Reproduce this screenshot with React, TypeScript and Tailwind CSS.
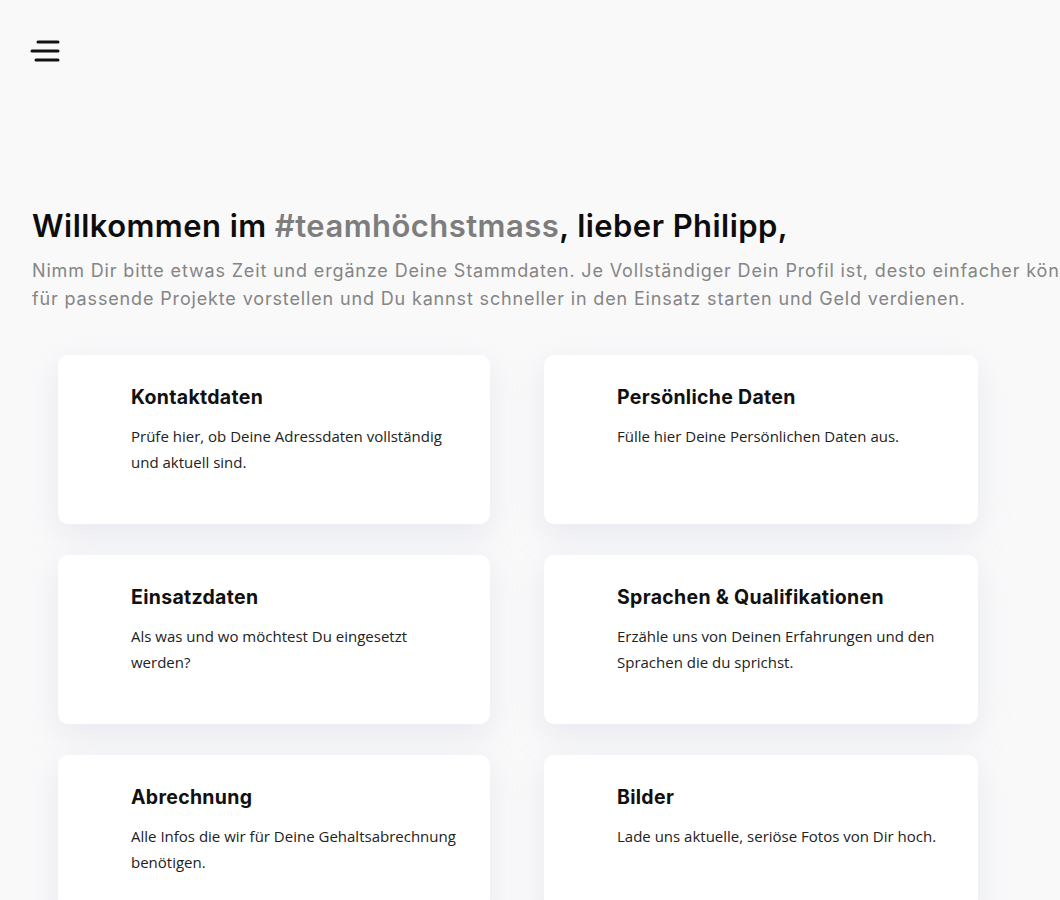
import React from 'react';

type Card = { title: string; text: string };

const cards: Card[] = [
  { title: 'Kontaktdaten', text: 'Prüfe hier, ob Deine Adressdaten vollständig und aktuell sind.' },
  { title: 'Persönliche Daten', text: 'Fülle hier Deine Persönlichen Daten aus.' },
  { title: 'Einsatzdaten', text: 'Als was und wo möchtest Du eingesetzt werden?' },
  { title: 'Sprachen & Qualifikationen', text: 'Erzähle uns von Deinen Erfahrungen und den Sprachen die du sprichst.' },
  { title: 'Abrechnung', text: 'Alle Infos die wir für Deine Gehaltsabrechnung benötigen.' },
  { title: 'Bilder', text: 'Lade uns aktuelle, seriöse Fotos von Dir hoch.' },
];

function MenuIcon() {
  return (
    <svg width="32" height="26" viewBox="0 0 32 26" fill="none" stroke="#111" strokeWidth="3" strokeLinecap="round">
      <line x1="8" y1="3" x2="28" y2="3" />
      <line x1="2" y1="12" x2="28" y2="12" />
      <line x1="6" y1="21" x2="28" y2="21" />
    </svg>
  );
}

export default function App() {
  return (
    <div className="min-h-screen w-full overflow-hidden bg-[#f9f9fa] font-['Inter',sans-serif]">
      <header className="pl-[30px] pt-[39px]">
        <MenuIcon />
      </header>

      <main className="px-[32px] pt-[141px]">
        <h1 className="text-[31px] font-semibold leading-[40px] tracking-[0.45px] text-[#0d0d0d] whitespace-nowrap">
          Willkommen im <span className="text-[#7d7d7d]">#teamhöchstmass</span>, lieber Philipp,
        </h1>
        <p className="mt-[11px] text-[18px] leading-[28px] tracking-[0.85px] text-[#858585] whitespace-nowrap">
          <span className="block">
            Nimm Dir bitte etwas Zeit und ergänze Deine Stammdaten. Je Vollständiger Dein Profil ist, desto einfacher können wir Dich
          </span>
          <span className="block">
            für passende Projekte vorstellen und Du kannst schneller in den Einsatz starten und Geld verdienen.
          </span>
        </p>

        <div className="mt-[42px] ml-[26px] grid w-[920px] grid-cols-[432px_434px] gap-x-[54px] gap-y-[31px]">
          {cards.map((c) => (
            <div
              key={c.title}
              className="h-[169px] rounded-[10px] bg-white pl-[73px] pr-[28px] pt-[28px] shadow-[0_10px_30px_rgba(200,204,220,0.35)]"
            >
              <h2 className="text-[19.5px] font-bold leading-[28px] tracking-[0.3px] text-[#111]">{c.title}</h2>
              <p className="mt-[12px] font-['Open_Sans',sans-serif] text-[15px] leading-[26px] text-[#222]">
                {c.text}
              </p>
            </div>
          ))}
        </div>
      </main>
    </div>
  );
}
